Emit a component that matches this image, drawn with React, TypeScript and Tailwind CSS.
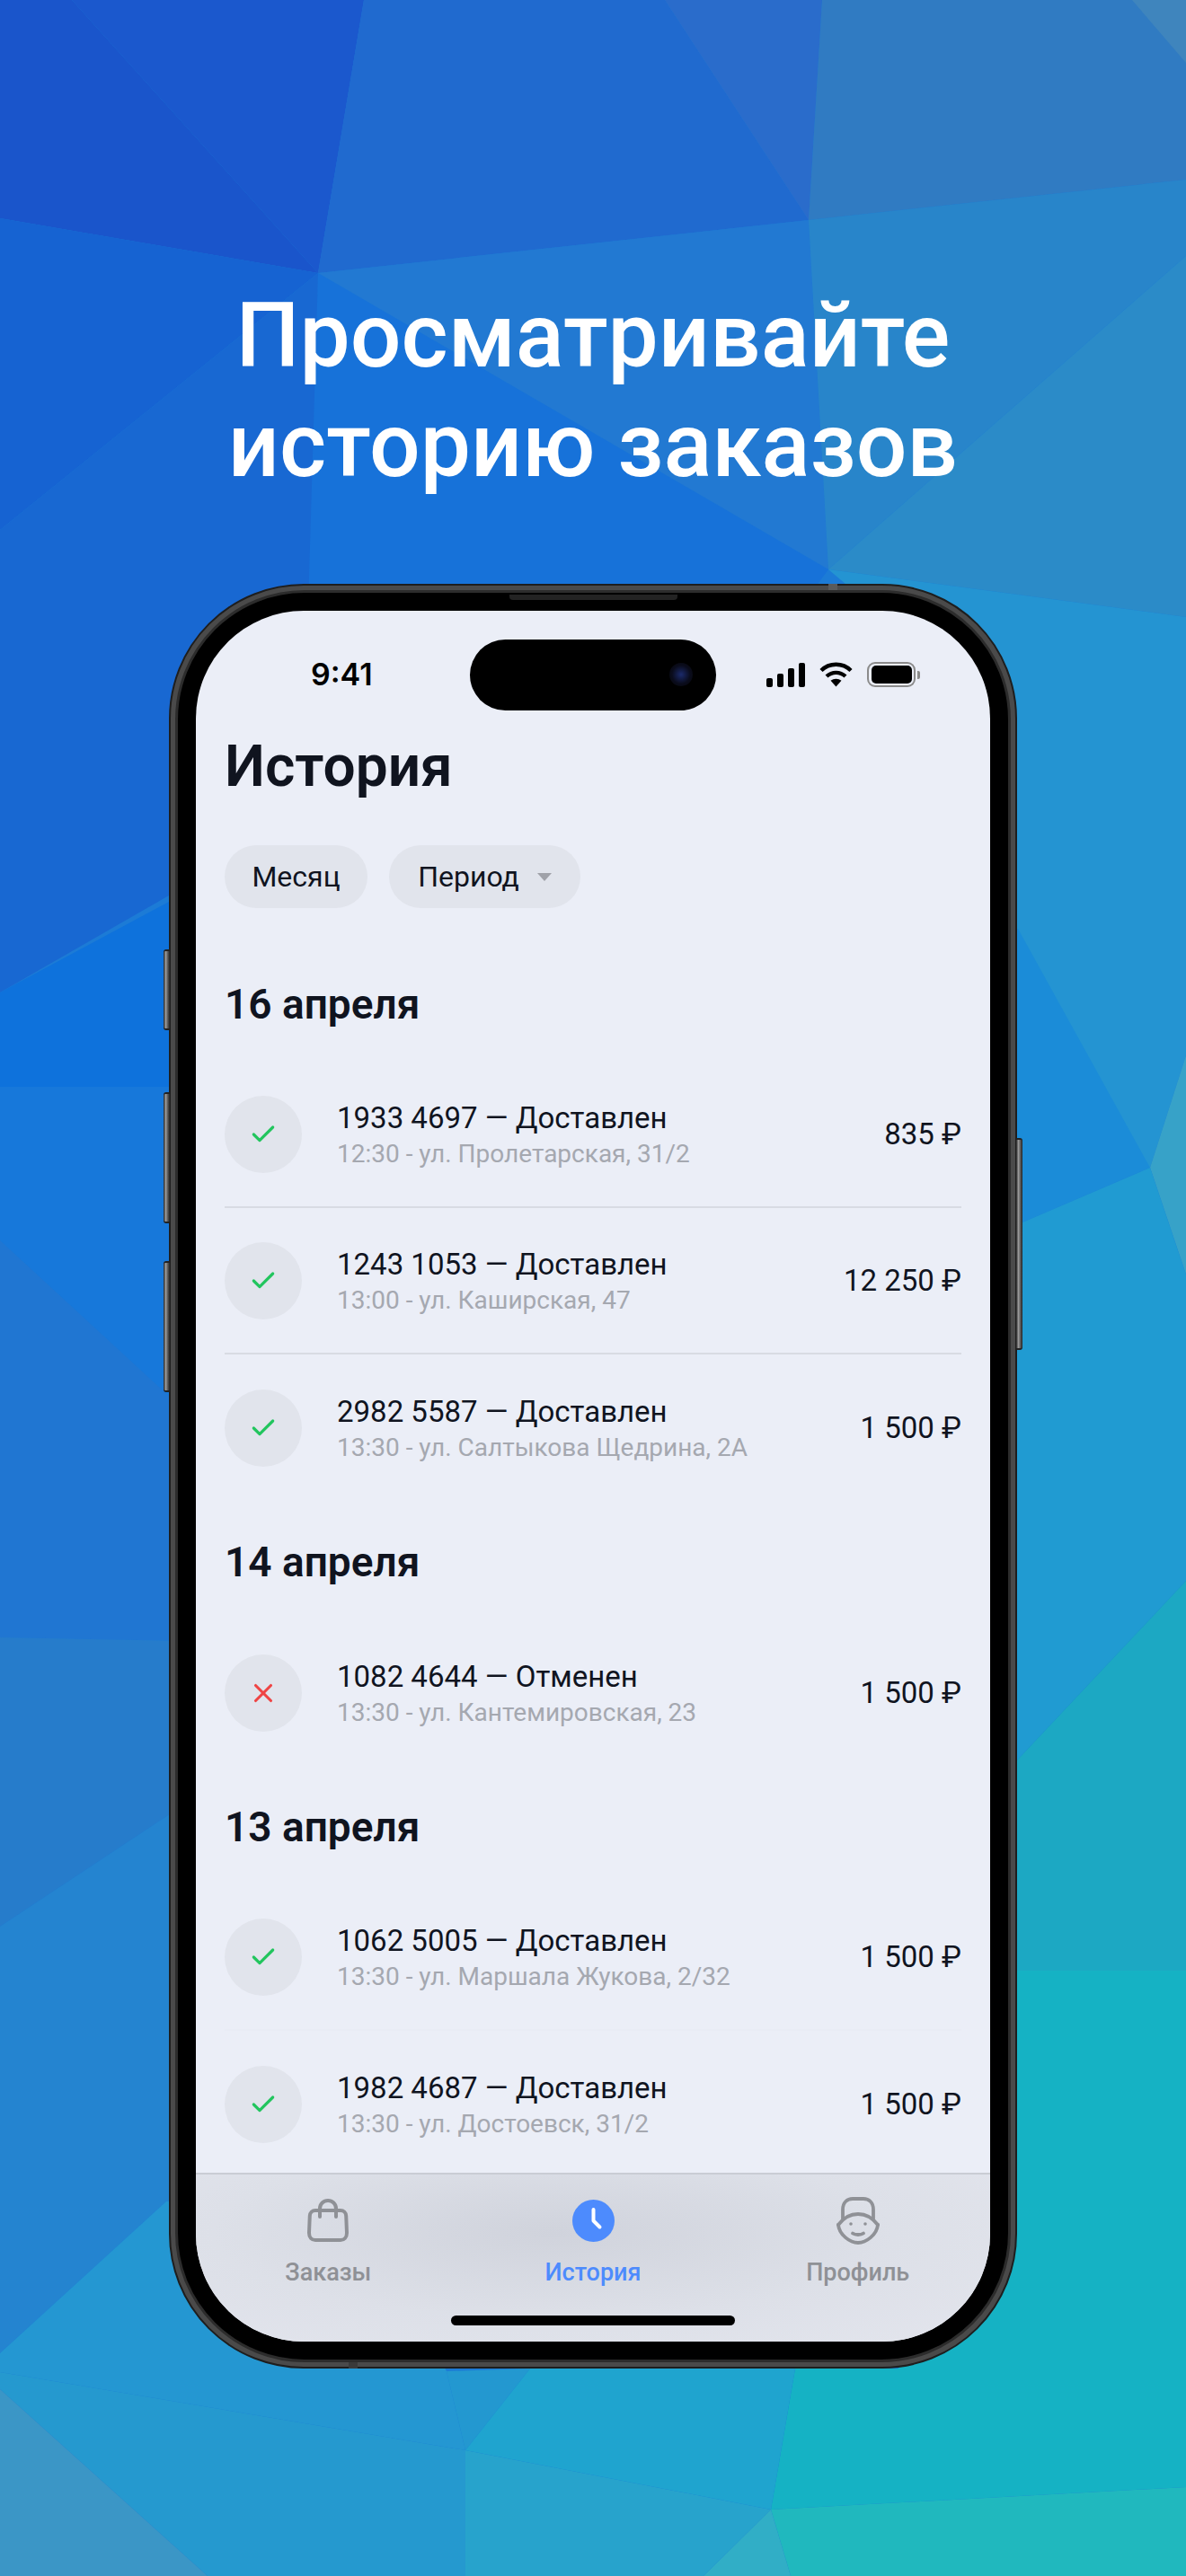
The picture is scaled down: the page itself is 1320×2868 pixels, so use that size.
import { Check, X } from "lucide-react";

// ─── Background ───────────────────────────────────────────────────────────────

const POLYGONS: [string, string][] = [
  ["0,0 80,0 354,304 0,243", "#1a55cb"],
  ["80,0 405,0 354,304", "#1b58cd"],
  ["405,0 740,0 900,245 354,304", "#206acf"],
  ["740,0 915,0 900,245", "#2a6ccb"],
  ["915,0 1320,0 1320,200 900,245", "#307bc2"],
  ["1260,0 1320,0 1320,70", "#3f85bd"],
  ["354,304 900,245 922,634", "#2279d2"],
  ["354,304 922,634 800,800 336,800", "#1772d9"],
  ["0,243 354,304 0,590", "#1663d2"],
  ["0,590 354,304 336,912 0,1105", "#1868d2"],
  ["900,245 1320,200 1320,285 922,634", "#2885ca"],
  ["1320,285 922,634 1320,687", "#2b8bc8"],
  ["922,634 1320,687 1320,1175 1280,1300 1000,1100 1000,700", "#2494d2"],
  ["1000,1034 1133,1034 1280,1300 1000,1420", "#1b8cd8"],
  ["1280,1300 1320,1175 1320,1419", "#37a2c8"],
  ["1000,1420 1280,1300 1320,1419 1320,1760 1000,2100", "#209bd2"],
  ["1000,2100 1320,1760 1320,2194 1000,2194", "#1ca8c3"],
  ["1000,2194 1320,2194 1320,2769 858,2794 885,2637 1000,2637", "#15b2c4"],
  ["0,1105 400,890 400,1210 0,1210", "#0e72dc"],
  ["0,1210 400,1210 400,1750 0,1381", "#1778da"],
  ["0,1381 400,1750 400,1831 0,1823", "#2076d2"],
  ["0,1823 400,1831 400,1880 0,2145", "#267ccb"],
  ["0,2145 400,1880 400,2451 185,2451 0,2620", "#2484d0"],
  ["0,2620 185,2451 400,2451 497,2640 518,2728 0,2641", "#2497d2"],
  ["497,2640 590,2637 518,2728", "#2398d0"],
  ["0,2641 518,2728 518,2868 231,2868 0,2660", "#2599cf"],
  ["0,2660 231,2868 0,2868", "#3b96c6"],
  ["518,2728 858,2794 783,2868 518,2868", "#27a3cc"],
  ["590,2637 885,2637 858,2794 518,2728", "#1fa4cf"],
  ["858,2794 1320,2769 1320,2868 880,2868", "#20b8be"],
  ["858,2794 880,2868 783,2868", "#31aec6"],
];

function Background() {
  return (
    <svg className="absolute inset-0" width="1320" height="2868" viewBox="0 0 1320 2868">
      <rect width="1320" height="2868" fill="#1c7bd6" />
      {POLYGONS.map(([points, fill]) => (
        <polygon key={points} points={points} fill={fill} />
      ))}
    </svg>
  );
}

// ─── Icons ────────────────────────────────────────────────────────────────────

function WifiIcon() {
  return (
    <svg width="37" height="28" viewBox="0 0 37 28" fill="none" stroke="#000" strokeWidth="4.4">
      <path d="M2 9.5C11 0.5 26 0.5 35 9.5" />
      <path d="M8 16C14 10.5 23 10.5 29 16" />
      <path d="M18.5 27.5L12.5 20.8C16 18 21 18 24.5 20.8Z" fill="#000" stroke="none" />
    </svg>
  );
}

function BagIcon() {
  return (
    <svg width="46" height="48" viewBox="0 0 46 48" fill="none" stroke="#8f9196" strokeWidth="4" strokeLinecap="round">
      <path d="M9 13H37C40.5 13 43 15.5 43.2 19L44 38C44 43 41 46 37 46H9C5 46 2 43 2 38L2.8 19C3 15.5 5.500 13 9 13Z" />
      <path d="M14 20V11C14 5.500 18 2 23 2C28 2 32 5.500 32 11V20" />
    </svg>
  );
}

function ClockIcon() {
  return (
    <svg width="47" height="47" viewBox="0 0 47 47" fill="none">
      <circle cx="23.500" cy="23.500" r="23.500" fill="#4d8bfd" />
      <path d="M23.500 11V23.500L30.500 30.500" stroke="#fff" strokeWidth="4" strokeLinecap="round" strokeLinejoin="round" />
    </svg>
  );
}

function ProfileIcon() {
  return (
    <svg width="48" height="53" viewBox="0 0 48 53" fill="none" stroke="#8f9196" strokeWidth="3.800" strokeLinecap="round">
      <path d="M7 24V14C7 6 12 2 18 2H30C36 2 41 6 41 14V24" />
      <path d="M2 31C8 23 16 19 24 19C32 19 40 23 46 31" />
      <path d="M2 31C3 42 15 51 24 51C33 51 45 42 46 31" />
      <path d="M18 40.500C21 42.500 27 42.500 30 40.500" />
      <circle cx="16" cy="30" r="1.800" fill="#8f9196" stroke="none" />
      <circle cx="32" cy="30" r="1.800" fill="#8f9196" stroke="none" />
    </svg>
  );
}

// ─── Screen parts ─────────────────────────────────────────────────────────────

function StatusBar() {
  return (
    <div className="flex h-[131px] items-start justify-between pl-[128px] pr-[78px] pt-[57px]">
      <span className="font-['Inter',sans-serif] text-[34px] font-semibold leading-[28px] text-black">9:41</span>
      <div className="flex h-[28px] items-center">
        <div className="flex items-end gap-[5px]">
          <div className="h-[10px] w-[7px] rounded-[2px] bg-black" />
          <div className="h-[15px] w-[7px] rounded-[2px] bg-black" />
          <div className="h-[21px] w-[7px] rounded-[2px] bg-black" />
          <div className="h-[27px] w-[7px] rounded-[2px] bg-black" />
        </div>
        <div className="ml-[16px] flex">
          <WifiIcon />
        </div>
        <div className="ml-[16px] flex h-[28px] w-[54px] items-center justify-center rounded-[9px] border-2 border-[#8b8b8b]">
          <div className="h-[20px] w-[45px] rounded-[5px] bg-black" />
        </div>
        <div className="ml-[2px] h-[9px] w-[3px] rounded-r-[2px] bg-[#8b8b8b]" />
      </div>
    </div>
  );
}

function OrderRow({
  title,
  subtitle,
  price,
  cancelled,
  divider,
}: {
  title: string;
  subtitle: string;
  price: string;
  cancelled?: boolean;
  divider?: string;
}) {
  return (
    <div className={`flex h-[163px] shrink-0 items-center ${divider ?? ""}`}>
      <div className="flex h-[86px] w-[86px] shrink-0 items-center justify-center rounded-full bg-[#e1e4ec]">
        {cancelled ? (
          <X className="h-[34px] w-[34px] text-[#ef4444]" strokeWidth={2.2} />
        ) : (
          <Check className="h-[32px] w-[32px] text-[#22c55e]" strokeWidth={2.4} />
        )}
      </div>
      <div className="ml-[39px] flex flex-1 flex-col pt-[5px]">
        <span className="text-[33px] leading-[40px] text-[#10141f]">{title}</span>
        <span className="text-[28px] leading-[40px] text-[#a5a8b0]">{subtitle}</span>
      </div>
      <span className="text-[33px] leading-[40px] text-[#10141f]">{price}</span>
    </div>
  );
}

function SectionTitle({ children, first }: { children: string; first?: boolean }) {
  return (
    <h2
      className={`${first ? "mt-[80px]" : "mt-[41px]"} mb-[37px] shrink-0 text-[46px] font-semibold leading-[54px] text-[#10141f]`}
    >
      {children}
    </h2>
  );
}

function TabItem({
  icon,
  label,
  active,
}: {
  icon: React.ReactNode;
  label: string;
  active?: boolean;
}) {
  return (
    <div className="flex w-[298px] flex-col items-center">
      <div className="flex h-[54px] items-center justify-center">{icon}</div>
      <span
        className={`mt-[14px] text-[27px] font-medium leading-[34px] ${active ? "text-[#4d8bfd]" : "text-[#8f9196]"}`}
      >
        {label}
      </span>
    </div>
  );
}

function TabBar() {
  return (
    <div className="relative flex h-[188px] shrink-0 justify-center border-t-2 border-[#c9ccd4] bg-[radial-gradient(ellipse_at_45%_35%,#d0d3dc_0%,#dde0e8_55%,#e3e5ed_100%)] pt-[24px]">
      <TabItem icon={<BagIcon />} label="Заказы" />
      <TabItem icon={<ClockIcon />} label="История" active />
      <TabItem icon={<ProfileIcon />} label="Профиль" />
      <div className="absolute bottom-[18px] left-1/2 h-[11px] w-[316px] -translate-x-1/2 rounded-full bg-black" />
    </div>
  );
}

// ─── Phone ────────────────────────────────────────────────────────────────────

function SideButton({ className }: { className: string }) {
  return (
    <div
      className={`absolute w-[7px] border-y-2 border-[#222] bg-[linear-gradient(90deg,#222,#9a9a9a_35%,#555_70%,#222)] ${className}`}
    />
  );
}

function Phone() {
  return (
    <div className="relative h-[1987px] w-[944px]">
      <SideButton className="left-[-6px] top-[407px] h-[90px] rounded-l-[3px]" />
      <SideButton className="left-[-6px] top-[566px] h-[146px] rounded-l-[3px]" />
      <SideButton className="left-[-6px] top-[754px] h-[146px] rounded-l-[3px]" />
      <SideButton className="right-[-6px] top-[617px] h-[236px] rounded-r-[3px]" />

      <div className="h-full w-full rounded-[150px] border-2 border-[#1e1e1e] bg-[#4a4a4a] p-[5px]">
        <div className="h-full w-full rounded-[144px] border-[3px] border-[#2c2c2c] bg-black p-[20px]">
          <div className="relative flex h-full flex-col overflow-hidden rounded-[120px] bg-[#ebeef7] px-0">
            <div className="absolute left-1/2 top-[32px] h-[79px] w-[274px] -translate-x-1/2 rounded-full bg-black">
              <div className="absolute right-[26px] top-[26px] h-[26px] w-[26px] rounded-full bg-[radial-gradient(circle,#1b2a6b_0%,#0a0c1c_55%,#050507_100%)]" />
            </div>
            <StatusBar />
            <div className="flex min-h-0 flex-1 flex-col overflow-hidden px-[32px]">
              <h1 className="h-[86px] shrink-0 text-[64px] font-semibold leading-[86px] text-[#10141f]">История</h1>
              <div className="mt-[44px] flex shrink-0 gap-[24px]">
                <div className="flex h-[70px] w-[159px] items-center justify-center rounded-full bg-[#e1e4ec] text-[32px] text-[#10141f]">
                  Месяц
                </div>
                <div className="flex h-[70px] w-[213px] items-center justify-center rounded-full bg-[#e1e4ec] text-[32px] text-[#10141f]">
                  Период
                  <div className="ml-[20px] h-0 w-0 border-x-[8px] border-t-[9px] border-x-transparent border-t-[#a0a2a9]" />
                </div>
              </div>

              <SectionTitle first>16 апреля</SectionTitle>
              <OrderRow
                title="1933 4697 — Доставлен"
                subtitle="12:30 - ул. Пролетарская, 31/2"
                price="835 ₽"
                divider="border-b-2 border-[#d8dbe3]"
              />
              <OrderRow
                title="1243 1053 — Доставлен"
                subtitle="13:00 - ул. Каширская, 47"
                price="12 250 ₽"
                divider="border-b-2 border-[#d8dbe3]"
              />
              <OrderRow
                title="2982 5587 — Доставлен"
                subtitle="13:30 - ул. Салтыкова Щедрина, 2А"
                price="1 500 ₽"
              />

              <SectionTitle>14 апреля</SectionTitle>
              <OrderRow
                title="1082 4644 — Отменен"
                subtitle="13:30 - ул. Кантемировская, 23"
                price="1 500 ₽"
                cancelled
              />

              <SectionTitle>13 апреля</SectionTitle>
              <OrderRow
                title="1062 5005 — Доставлен"
                subtitle="13:30 - ул. Маршала Жукова, 2/32"
                price="1 500 ₽"
                divider="border-b-2 border-[#e9ecf5]"
              />
              <OrderRow
                title="1982 4687 — Доставлен"
                subtitle="13:30 - ул. Достоевск, 31/2"
                price="1 500 ₽"
              />
            </div>
            <TabBar />
          </div>
        </div>
      </div>

      {/* speaker slit and antenna bands */}
      <div className="absolute left-[379px] top-[12px] h-[6px] w-[187px] rounded-b-[4px] bg-[#232323]" />
      <div className="absolute right-[200px] top-0 h-[7px] w-[10px] bg-[#5a5a5a]" />
      <div className="absolute bottom-0 left-[200px] h-[7px] w-[10px] bg-[#3a3a3a]" />
    </div>
  );
}

export default function App() {
  return (
    <div className="relative h-[2868px] w-[1320px] overflow-hidden font-['Roboto',sans-serif]">
      <Background />
      <div className="relative flex flex-col items-center pt-[313px]">
        <h1 className="mb-[93px] text-center text-[100px] font-medium leading-[122px] text-white">
          Просматривайте
          <br />
          историю заказов
        </h1>
        <Phone />
      </div>
    </div>
  );
}
